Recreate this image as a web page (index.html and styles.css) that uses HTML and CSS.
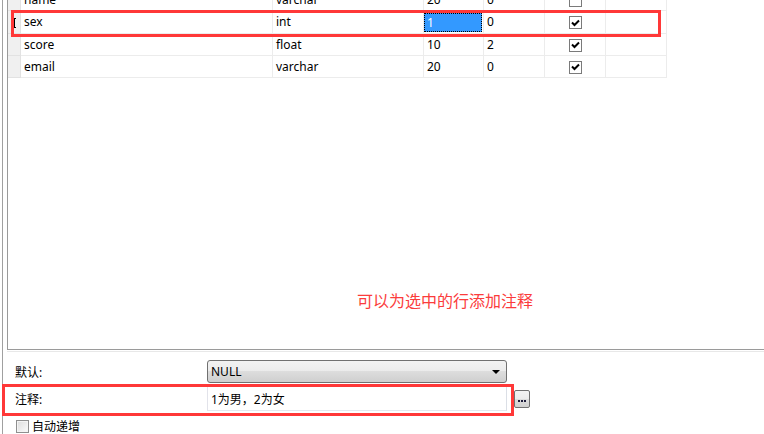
FILE: index.html
```html
<!DOCTYPE html>
<html>
<head>
<meta charset="utf-8">
<link rel="stylesheet" href="styles.css">
</head>
<body>
<div class="window">
  <div class="grid">
    <table class="fields">
      <colgroup>
        <col class="c-hdr"><col class="c-name"><col class="c-type"><col class="c-len"><col class="c-dec"><col class="c-nn"><col class="c-key">
      </colgroup>
      <tr>
        <td class="hdr"></td><td>name</td><td>varchar</td><td>20</td><td>0</td>
        <td class="chk"><span class="cb"></span></td><td></td>
      </tr>
      <tr>
        <td class="hdr"><span class="ibeam"></span></td>
        <td>sex</td><td>int</td><td class="sel"><span class="focus">1</span></td><td>0</td>
        <td class="chk"><span class="cb on"><svg width="9" height="8" viewBox="0 0 9 8"><path d="M1 3.5L3.5 6L8 1.5" stroke="#000" stroke-width="2" fill="none"/></svg></span></td><td></td>
      </tr>
      <tr>
        <td class="hdr"></td><td>score</td><td>float</td><td>10</td><td>2</td>
        <td class="chk"><span class="cb on"><svg width="9" height="8" viewBox="0 0 9 8"><path d="M1 3.5L3.5 6L8 1.5" stroke="#000" stroke-width="2" fill="none"/></svg></span></td><td></td>
      </tr>
      <tr>
        <td class="hdr"></td><td>email</td><td>varchar</td><td>20</td><td>0</td>
        <td class="chk"><span class="cb on"><svg width="9" height="8" viewBox="0 0 9 8"><path d="M1 3.5L3.5 6L8 1.5" stroke="#000" stroke-width="2" fill="none"/></svg></span></td><td></td>
      </tr>
    </table>
  </div>
  <div class="sep"></div>
  <div class="form">
    <div class="label">默认:</div>
    <div class="select"><span>NULL</span><svg width="8" height="4" viewBox="0 0 8 4"><path d="M0 0H8L4 4Z" fill="#000"/></svg></div>
    <div></div>
    <div class="label">注释:</div>
    <div class="input">1为男，2为女</div>
    <div class="dots"><i></i><i></i><i></i></div>
  </div>
  <div class="auto"><span class="cb2"></span><span>自动递增</span></div>
</div>
<div class="note">可以为选中的行添加注释</div>
<div class="mark mark-row"></div>
<div class="mark mark-comment"></div>
</body>
</html>
```
FILE: styles.css
```css
* { box-sizing: border-box; }
html, body { margin: 0; padding: 0; }
body {
  width: 764px;
  height: 434px;
  overflow: hidden;
  background: #fff;
  position: relative;
  font-family: "Noto Sans", "Noto Sans CJK SC", sans-serif;
  font-size: 12px;
  color: #000;
}
.window {
  margin-left: 2px;
  border-left: 1px solid #a0a0a0;
  padding-left: 4px;
  height: 434px;
}
.grid {
  height: 350px;
  border-left: 1px solid #9a9a9a;
  border-bottom: 1px solid #9a9a9a;
  overflow: hidden;
}
.fields {
  border-collapse: separate;
  border-spacing: 0;
  table-layout: fixed;
  width: 659px;
  margin-top: -11px;
}
.c-hdr { width: 13px; }
.c-name { width: 252px; }
.c-type { width: 151px; }
.c-len { width: 60px; }
.c-dec { width: 61px; }
.c-nn { width: 61px; }
.c-key { width: 61px; }
.fields td {
  height: 22px;
  padding: 0 0 0 3px;
  border-right: 1px solid #ececec;
  border-bottom: 1px solid #ececec;
  white-space: nowrap;
  overflow: hidden;
  line-height: 20px;
  vertical-align: middle;
}
.fields td.hdr {
  background: #f0f0f0;
  border-right-color: #e2e2e2;
  border-bottom-color: #e2e2e2;
  padding: 0 0 0 4px;
}
.ibeam {
  display: block;
  position: relative;
  width: 4px;
  height: 10px;
  border-top: 1px solid #000;
  border-bottom: 1px solid #000;
  margin-top: 2px;
}
.ibeam::before {
  content: "";
  position: absolute;
  left: 1px;
  top: 0;
  width: 2px;
  height: 8px;
  background: #000;
}
.fields td.sel { padding: 2px 1px 1px 0; }
.focus {
  display: block;
  height: 19px;
  background: #3399ff;
  color: #fff;
  border: 1px dotted #000;
  padding-left: 2px;
  line-height: 17px;
}
.fields td.chk { text-align: center; padding: 0; }
.cb {
  display: inline-flex;
  align-items: center;
  justify-content: center;
  width: 13px;
  height: 13px;
  border: 1px solid #7a7a7a;
  background: #fff;
  vertical-align: middle;
  margin-left: 1px;
}
.sep {
  height: 1px;
  margin-top: 1px;
  background: #e8e8e8;
}
.form {
  display: grid;
  grid-template-columns: 192px 300px 24px;
  grid-auto-rows: auto;
  row-gap: 3px;
  margin-top: 8px;
  padding-left: 8px;
  align-items: center;
}
.label { font-size: 12px; }
.select {
  height: 23px;
  border: 1px solid #707070;
  border-radius: 3px;
  background: linear-gradient(#f2f2f2 0%, #ebebeb 50%, #dddddd 50%, #cfcfcf 100%);
  display: flex;
  align-items: center;
  justify-content: space-between;
  padding: 0 6px 0 3px;
}
.input {
  height: 25px;
  border: 1px solid #abadb3;
  border-left-color: #e2e3ea;
  border-right-color: #dbdfe6;
  border-bottom-color: #e3e9ef;
  background: #fff;
  display: flex;
  align-items: center;
  padding-left: 3px;
}
.dots {
  width: 16px;
  height: 18px;
  margin-left: 7px;
  border: 1px solid #707070;
  border-radius: 2px;
  background: linear-gradient(#f2f2f2 0%, #ebebeb 50%, #dddddd 50%, #cfcfcf 100%);
  display: flex;
  justify-content: center;
  align-items: flex-end;
  gap: 1px;
  padding-bottom: 5px;
}
.dots i {
  display: block;
  width: 2px;
  height: 2px;
  background: #1a1a3a;
}
.auto {
  display: flex;
  align-items: center;
  gap: 3px;
  margin-top: 6px;
  padding-left: 9px;
  font-size: 12px;
}
.cb2 {
  width: 13px;
  height: 13px;
  border: 1px solid #8f8f8f;
  background: linear-gradient(135deg, #dcdcdc, #fbfbfb);
  box-shadow: inset 0 0 0 1px #f4f4f4;
}
.note {
  position: absolute;
  left: 357px;
  top: 291px;
  font-size: 16px;
  line-height: 18px;
  color: #fb3c3c;
  font-family: "Noto Sans CJK SC", sans-serif;
}
.mark {
  position: absolute;
  border: 3px solid #ff3838;
}
.mark-row { left: 11px; top: 10px; width: 650px; height: 27px; }
.mark-comment { left: 2px; top: 384px; width: 512px; height: 32px; }
```
